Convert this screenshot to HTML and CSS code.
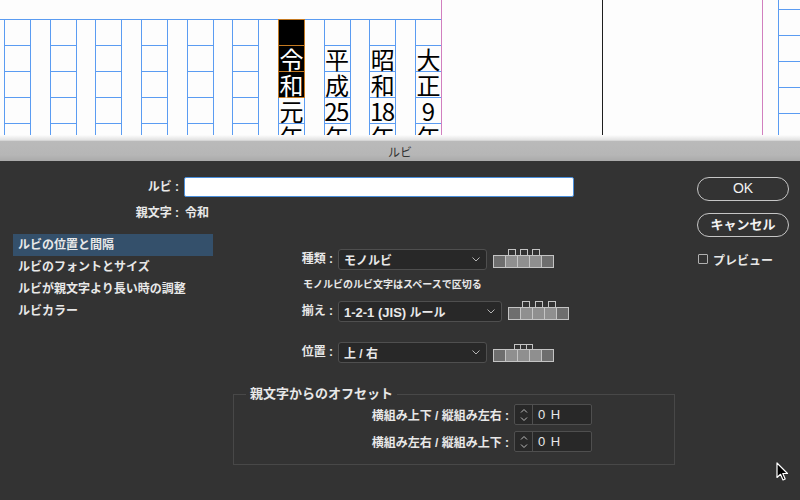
FILE: index.html
```html
<!DOCTYPE html>
<html lang="ja">
<head>
    <meta charset="utf-8">
    <title>ルビ</title>
    <link rel="stylesheet" href="styles.css">
</head>
<body>
    <!-- Document spread behind the dialog -->
    <div class="doc">
        <div class="spread">
            <div class="col"><div class="cell"></div><div class="cell"></div><div class="cell"></div><div class="cell"></div><div class="cell"></div></div>
            <div class="col"><div class="cell"></div><div class="cell"></div><div class="cell"></div><div class="cell"></div><div class="cell"></div></div>
            <div class="col"><div class="cell"></div><div class="cell"></div><div class="cell"></div><div class="cell"></div><div class="cell"></div></div>
            <div class="col"><div class="cell"></div><div class="cell"></div><div class="cell"></div><div class="cell"></div><div class="cell"></div></div>
            <div class="col"><div class="cell"></div><div class="cell"></div><div class="cell"></div><div class="cell"></div><div class="cell"></div></div>
            <div class="col"><div class="cell"></div><div class="cell"></div><div class="cell"></div><div class="cell"></div><div class="cell"></div></div>
            <div class="col">
                <div class="cell sel first"></div>
                <div class="cell sel">令</div>
                <div class="cell sel">和</div>
                <div class="cell">元</div>
                <div class="cell">年</div>
            </div>
            <div class="col">
                <div class="cell"></div>
                <div class="cell">平</div>
                <div class="cell">成</div>
                <div class="cell num">25</div>
                <div class="cell">年</div>
            </div>
            <div class="col">
                <div class="cell"></div>
                <div class="cell">昭</div>
                <div class="cell">和</div>
                <div class="cell num">18</div>
                <div class="cell">年</div>
            </div>
            <div class="col">
                <div class="cell"></div>
                <div class="cell">大</div>
                <div class="cell">正</div>
                <div class="cell">9</div>
                <div class="cell">年</div>
            </div>
        </div>
        <div class="guide margin-guide"></div>
        <div class="gap gap-a"></div>
        <div class="guide spine"></div>
        <div class="gap gap-b"></div>
        <div class="guide margin-guide"></div>
        <div class="gap gap-c"></div>
        <div class="next-page">
            <div class="row"></div><div class="row"></div><div class="row"></div><div class="row"></div><div class="row"></div><div class="row"></div>
        </div>
    </div>

    <div class="titlebar">ルビ</div>

    <div class="dialog">
        <div class="main">
            <div class="head-grid">
                <div class="lbl">ルビ :</div>
                <div class="ruby-input"></div>
                <div class="lbl">親文字 :</div>
                <div class="base-text">令和</div>
            </div>

            <div class="body">
                <ul class="menu">
                    <li class="active">ルビの位置と間隔</li>
                    <li>ルビのフォントとサイズ</li>
                    <li>ルビが親文字より長い時の調整</li>
                    <li>ルビカラー</li>
                </ul>

                <div class="panel">
                    <div class="opt">
                        <div class="opt-label">種類 :</div>
                        <div class="select w149"><span>モノルビ</span>
                            <svg width="8" height="5" viewBox="0 0 8 5"><polyline points="0.5,0.5 4,4 7.5,0.5" fill="none" stroke="#b5b5b5" stroke-width="1"/></svg>
                        </div>
                        <svg class="glyph" width="62" height="20" viewBox="0 0 62 20">
                            <rect x="15.5" y="0.5" width="7" height="6" fill="none" stroke="#c4c4c4"/>
                            <rect x="27.5" y="0.5" width="7" height="6" fill="none" stroke="#c4c4c4"/>
                            <rect x="39.5" y="0.5" width="7" height="6" fill="none" stroke="#c4c4c4"/>
                            <rect x="0.5" y="6.5" width="12" height="12" fill="#6e6e6e" stroke="#c4c4c4"/>
                            <rect x="12.5" y="6.5" width="12" height="12" fill="#8f8f8f" stroke="#c4c4c4"/>
                            <rect x="24.5" y="6.5" width="12" height="12" fill="#8f8f8f" stroke="#c4c4c4"/>
                            <rect x="36.5" y="6.5" width="12" height="12" fill="#8f8f8f" stroke="#c4c4c4"/>
                            <rect x="48.5" y="6.5" width="12" height="12" fill="#6e6e6e" stroke="#c4c4c4"/>
                        </svg>
                    </div>
                    <div class="note">モノルビのルビ文字はスペースで区切る</div>
                    <div class="opt">
                        <div class="opt-label">揃え :</div>
                        <div class="select w164"><span><span class="latin">1-2-1 (JIS)</span> ルール</span>
                            <svg width="8" height="5" viewBox="0 0 8 5"><polyline points="0.5,0.5 4,4 7.5,0.5" fill="none" stroke="#b5b5b5" stroke-width="1"/></svg>
                        </div>
                        <svg class="glyph" width="62" height="20" viewBox="0 0 62 20">
                            <rect x="14.5" y="0.5" width="7" height="6" fill="none" stroke="#c4c4c4"/>
                            <rect x="27.5" y="0.5" width="7" height="6" fill="none" stroke="#c4c4c4"/>
                            <rect x="40.5" y="0.5" width="7" height="6" fill="none" stroke="#c4c4c4"/>
                            <rect x="0.5" y="6.5" width="12" height="12" fill="#6e6e6e" stroke="#c4c4c4"/>
                            <rect x="12.5" y="6.5" width="12" height="12" fill="#8f8f8f" stroke="#c4c4c4"/>
                            <rect x="24.5" y="6.5" width="12" height="12" fill="#8f8f8f" stroke="#c4c4c4"/>
                            <rect x="36.5" y="6.5" width="12" height="12" fill="#8f8f8f" stroke="#c4c4c4"/>
                            <rect x="48.5" y="6.5" width="12" height="12" fill="#6e6e6e" stroke="#c4c4c4"/>
                        </svg>
                    </div>
                    <div class="opt opt-pos">
                        <div class="opt-label">位置 :</div>
                        <div class="select w149"><span>上 / 右</span>
                            <svg width="8" height="5" viewBox="0 0 8 5"><polyline points="0.5,0.5 4,4 7.5,0.5" fill="none" stroke="#b5b5b5" stroke-width="1"/></svg>
                        </div>
                        <svg class="glyph" width="62" height="20" viewBox="0 0 62 20">
                            <rect x="21.5" y="1.5" width="6" height="5" fill="none" stroke="#c4c4c4"/>
                            <rect x="27.5" y="1.5" width="6" height="5" fill="none" stroke="#c4c4c4"/>
                            <rect x="33.5" y="1.5" width="6" height="5" fill="none" stroke="#c4c4c4"/>
                            <rect x="0.5" y="6.5" width="12" height="12" fill="#6e6e6e" stroke="#c4c4c4"/>
                            <rect x="12.5" y="6.5" width="12" height="12" fill="#8f8f8f" stroke="#c4c4c4"/>
                            <rect x="24.5" y="6.5" width="12" height="12" fill="#8f8f8f" stroke="#c4c4c4"/>
                            <rect x="36.5" y="6.5" width="12" height="12" fill="#8f8f8f" stroke="#c4c4c4"/>
                            <rect x="48.5" y="6.5" width="12" height="12" fill="#6e6e6e" stroke="#c4c4c4"/>
                        </svg>
                    </div>

                    <fieldset class="offset">
                        <legend>親文字からのオフセット</legend>
                        <div class="off-row">
                            <div class="off-label">横組み上下 / 縦組み左右 :</div>
                            <div class="spin">
                                <div class="arrows">
                                    <svg width="8" height="14" viewBox="0 0 8 14"><polyline points="1,4.5 4,1.5 7,4.5" fill="none" stroke="#bbb"/><polyline points="1,9.5 4,12.5 7,9.5" fill="none" stroke="#bbb"/></svg>
                                </div>
                                <div class="val">0 H</div>
                            </div>
                        </div>
                        <div class="off-row">
                            <div class="off-label">横組み左右 / 縦組み上下 :</div>
                            <div class="spin">
                                <div class="arrows">
                                    <svg width="8" height="14" viewBox="0 0 8 14"><polyline points="1,4.5 4,1.5 7,4.5" fill="none" stroke="#bbb"/><polyline points="1,9.5 4,12.5 7,9.5" fill="none" stroke="#bbb"/></svg>
                                </div>
                                <div class="val">0 H</div>
                            </div>
                        </div>
                    </fieldset>
                </div>
            </div>
        </div>

        <div class="side">
            <div class="btn btn-ok">OK</div>
            <div class="btn">キャンセル</div>
            <label class="check"><span class="box"></span>プレビュー</label>
        </div>

        <!-- mouse pointer -->
        <svg class="pointer" width="14" height="20" viewBox="0 0 14 20">
            <path d="M1,1 L1,15.5 L4.5,12.3 L7,18 L9.2,17 L6.8,11.5 L11.5,11.5 Z" fill="#000" stroke="#fff" stroke-width="1.2" stroke-linejoin="round"/>
        </svg>
    </div>
</body>
</html>
```

FILE: styles.css
```css
body {
    margin: 0;
    width: 800px;
    height: 500px;
    overflow: hidden;
    background: #333333;
    font-family: "Liberation Sans", "Noto Sans CJK JP", sans-serif;
}

/* ---- document behind ---- */
.doc {
    display: flex;
    align-items: flex-start;
    height: 140px;
    overflow: hidden;
    background: #fdfdfd;
    font-family: "Noto Sans CJK JP", sans-serif;
    position: relative;
}

.doc::after {
    content: "";
    position: absolute;
    left: 0;
    right: 0;
    bottom: 0;
    height: 5px;
    background: linear-gradient(#fdfdfd, #e2e2e2);
}

.spread {
    flex: none;
    display: flex;
    gap: 18.67px;
    width: 441px;
    box-sizing: border-box;
    margin-top: 19px;
    padding-left: 4px;
    border-top: 1px solid #5b9cf2;
}

.col {
    flex: none;
    width: 27px;
    box-sizing: border-box;
    border-left: 1px solid #5b9cf2;
    border-right: 1px solid #5b9cf2;
}

.cell {
    height: 26px;
    box-sizing: border-box;
    border-bottom: 1px solid #5b9cf2;
    font-size: 24px;
    line-height: 25px;
    text-align: center;
    color: #000;
}

.cell.num {
    letter-spacing: -1.5px;
    text-indent: -2px;
}

.cell.sel {
    background: #000;
    color: #fff;
    margin: 0 -1px;
    border-left: 1px solid #c47a22;
    border-right: 1px solid #c47a22;
    border-bottom-color: #c47a22;
}

.cell.sel.first {
    margin-top: -1px;
    height: 27px;
    border-top: 1px solid #c47a22;
}

.guide {
    flex: none;
    align-self: stretch;
    width: 1px;
}

.margin-guide { background: #d17fbf; }
.spine { background: #1e1e1e; }

.gap { flex: none; }
.gap-a { width: 160px; }
.gap-b { width: 159px; }
.gap-c { width: 15px; }

.next-page {
    flex: 1;
    align-self: stretch;
    border-left: 1px solid #5b9cf2;
    padding-top: 9px;
}

.next-page .row {
    height: 26px;
    box-sizing: border-box;
    border-top: 1px solid #5b9cf2;
}

/* ---- dialog ---- */
.titlebar {
    height: 20px;
    line-height: 22px;
    border-top: 1px solid #d6d6d6;
    background: linear-gradient(#bababa, #b6b6b6 70%, #aaaaaa);
    text-align: center;
    font-size: 12px;
    color: #333;
    font-family: "Noto Sans CJK JP", sans-serif;
}

.dialog {
    position: relative;
    display: flex;
    height: 339px;
    color: #e8e8e8;
    font-size: 12px;
    font-weight: bold;
}

.main {
    width: 680px;
    flex: none;
}

.head-grid {
    display: grid;
    grid-template-columns: 180px 390px;
    column-gap: 4px;
    row-gap: 6px;
    padding-top: 16px;
    line-height: 20px;
}

.lbl {
    text-align: right;
    padding-right: 1px;
}

.ruby-input {
    height: 20px;
    box-sizing: border-box;
    background: #fff;
    border: 1px solid #4a8fdc;
    border-radius: 2px;
}

.base-text {
    padding-left: 1px;
}

.body {
    display: flex;
    margin-top: 11px;
    padding-left: 13px;
}

.menu {
    list-style: none;
    margin: 0;
    padding: 0;
    width: 200px;
    flex: none;
}

.menu li {
    height: 22px;
    line-height: 22px;
    padding-left: 5px;
}

.menu li.active {
    background: #34506b;
}

.panel {
    width: 442px;
    margin-left: 20px;
    padding-top: 15px;
}

.opt {
    display: flex;
    align-items: flex-start;
    height: 21px;
}

.opt-label {
    width: 102px;
    flex: none;
    text-align: right;
    line-height: 21px;
    padding-right: 2px;
    box-sizing: border-box;
}

.select {
    display: flex;
    align-items: center;
    justify-content: space-between;
    height: 21px;
    box-sizing: border-box;
    margin-left: 3px;
    padding: 0 6px 0 5px;
    background: #282828;
    border: 1px solid #4f4f4f;
    border-radius: 3px;
    font-size: 12px;
}

.latin {
    font-size: 13px;
}

.w149 { width: 149px; }
.w164 { width: 164px; }

.glyph {
    margin-left: 6px;
}

.opt-pos .glyph {
    margin-top: 1px;
}

.note {
    font-size: 10px;
    line-height: 12px;
    padding-left: 70px;
    margin: 9px 0 10px;
}

.opt-pos {
    margin-top: 20px;
}

.offset {
    margin: 23px 0 0;
    padding: 2px 12px 12px;
    border: 1px solid #484848;
    min-width: 0;
}

.offset legend {
    padding: 0 4px;
    font-size: 13px;
    line-height: 16px;
}

.off-row {
    display: flex;
    align-items: center;
    height: 21px;
}

.off-row + .off-row {
    margin-top: 6px;
}

.off-label {
    width: 268px;
    flex: none;
    box-sizing: border-box;
    padding-right: 5px;
    text-align: right;
}

.spin {
    display: flex;
    width: 78px;
    height: 21px;
    box-sizing: border-box;
    background: #282828;
    border: 1px solid #4f4f4f;
    border-radius: 2px;
}

.arrows {
    width: 17px;
    display: flex;
    align-items: center;
    justify-content: center;
    border-right: 1px solid #4f4f4f;
}

.val {
    padding-left: 5px;
    line-height: 19px;
    font-size: 13px;
    font-weight: normal;
    word-spacing: 2px;
}

.side {
    display: flex;
    flex-direction: column;
    align-items: flex-start;
    padding: 16px 0 0 17px;
}

.btn {
    width: 92px;
    height: 24px;
    box-sizing: border-box;
    border: 1.5px solid #c6c6c6;
    border-radius: 12px;
    text-align: center;
    line-height: 21px;
    font-size: 13px;
    color: #f2f2f2;
}

.btn-ok {
    font-size: 14px;
    font-weight: normal;
}

.btn + .btn {
    margin-top: 12px;
}

.check {
    display: flex;
    align-items: center;
    margin-top: 14px;
    height: 16px;
    padding-left: 1px;
}

.check .box {
    width: 10px;
    height: 10px;
    box-sizing: border-box;
    border: 1px solid #b0b0b0;
    border-radius: 1px;
    margin-right: 5px;
}

.pointer {
    position: absolute;
    left: 776px;
    top: 301px;
}
```
